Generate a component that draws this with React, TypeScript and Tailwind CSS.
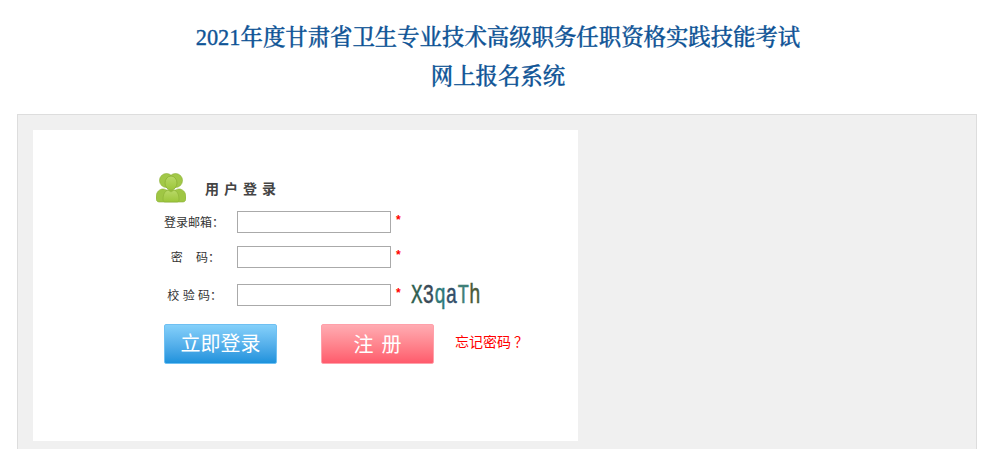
import React from "react";

const cjk = '"Liberation Sans","Noto Sans CJK SC",sans-serif';

function Users() {
  return (
    <svg width="30" height="30" viewBox="0 0 30 30" className="shrink-0">
      <defs>
        <linearGradient id="g" x1="0" y1="0" x2="0" y2="1">
          <stop offset="0" stopColor="#b9d968" />
          <stop offset="1" stopColor="#9cc63a" />
        </linearGradient>
      </defs>
      <circle cx="10.5" cy="7.5" r="7" fill="#a2c848" stroke="#8cb035" strokeWidth="0.6" />
      <circle cx="19.5" cy="7.5" r="7" fill="#a2c848" stroke="#8cb035" strokeWidth="0.6" />
      <path d="M0 25c0-5 2-8 6-9 2 0 3 0 4 1l10 0c1-1 2-1 4-1 4 1 6 4 6 9 0 2-1 4-3 4H3c-2 0-3-2-3-4z" fill="#9fc644" stroke="#8cb035" strokeWidth="0.6" />
      <ellipse cx="15" cy="10" rx="6" ry="7" fill="url(#g)" stroke="#8cb035" strokeWidth="0.8" />
      <path d="M7 27c0-6 2-9 5-10l3 2 3-2c3 1 5 4 5 10 0 1-1 2-2 2H9c-1 0-2-1-2-2z" fill="url(#g)" stroke="#8cb035" strokeWidth="0.6" />
    </svg>
  );
}

function Field({ label, className, children }: { label: React.ReactNode; className: string; children?: React.ReactNode }) {
  return (
    <div className={`flex items-center ${className}`}>
      <div className="h-[22px] w-[81px] shrink-0 translate-y-[1px] pl-[8px] text-[12px] leading-[22px] whitespace-pre text-[#333]">{label}</div>
      <div className="h-[22px] w-[154px] shrink-0 border border-[#aaaaaa] bg-white" />
      <span className="ml-[5px] -mt-[4px] w-[7px] text-[12px] font-bold leading-[12px] text-[#ff0000]">*</span>
      {children}
    </div>
  );
}

export default function App() {
  return (
    <div className="h-[449px] overflow-hidden bg-white" style={{ fontFamily: cjk }}>
      <h1 className="flex h-[114px] flex-col items-center pt-[18px] text-[22.4px] font-medium leading-[39px] text-[#0f5496] [-webkit-text-stroke:0.35px_#0f5496]" style={{ fontFamily: '"Liberation Serif","Noto Serif CJK SC","Noto Sans CJK SC",serif' }}>
        <span>2021年度甘肃省卫生专业技术高级职务任职资格实践技能考试</span>
        <span>网上报名系统</span>
      </h1>
      <div className="ml-[17px] h-[340px] w-[960px] border border-[#dddddd] bg-[#f0f0f0] p-[15px]">
        <div className="h-[311px] w-[545px] bg-white pl-[123px] pt-[43px]">
          <div className="flex h-[30px] items-center">
            <Users />
            <span className="ml-[19px] mt-[2px] text-[14px] font-bold tracking-[5px] text-[#444]">用户登录</span>
          </div>
          <Field label="登录邮箱：" className="mt-[8px]" />
          <Field label={"  密    码："} className="mt-[13px]" />
          <Field label={" 校 验 码："} className="mt-[13px]">
            <span className="ml-[8px] translate-y-[1px] origin-left scale-x-[0.69] text-[28px] leading-[28px] [-webkit-text-stroke:0.5px_currentColor]" style={{ fontFamily: '"Liberation Mono",monospace' }}>
              <span className="text-[#2f5f4f]">X</span>
              <span className="text-[#3b4a58]">3</span>
              <span className="text-[#2e7a7a]">q</span>
              <span className="text-[#33506a]">a</span>
              <span className="text-[#3f8078]">T</span>
              <span className="text-[#4a5a3a]">h</span>
            </span>
          </Field>
          <div className="mt-[15px] flex items-center">
            <button className="ml-[8px] h-[40px] w-[113px] rounded-[2px] border border-[#6fc0f2] bg-gradient-to-b from-[#84d0fa] to-[#1b92dc] text-[20px] leading-[34px] text-white">立即登录</button>
            <button className="ml-[44px] flex h-[40px] w-[113px] items-center justify-center gap-[8px] rounded-[2px] border border-[#ffa0aa] bg-gradient-to-b from-[#ffabb2] to-[#ff5a6c] pt-[2px] text-[20px] text-white">
              <span>注</span>
              <span>册</span>
            </button>
            <span className="ml-[21px] -mt-[4px] text-[14px] text-[#ff0000]">忘记密码<span className="ml-[3px]">？</span></span>
          </div>
        </div>
      </div>
    </div>
  );
}
